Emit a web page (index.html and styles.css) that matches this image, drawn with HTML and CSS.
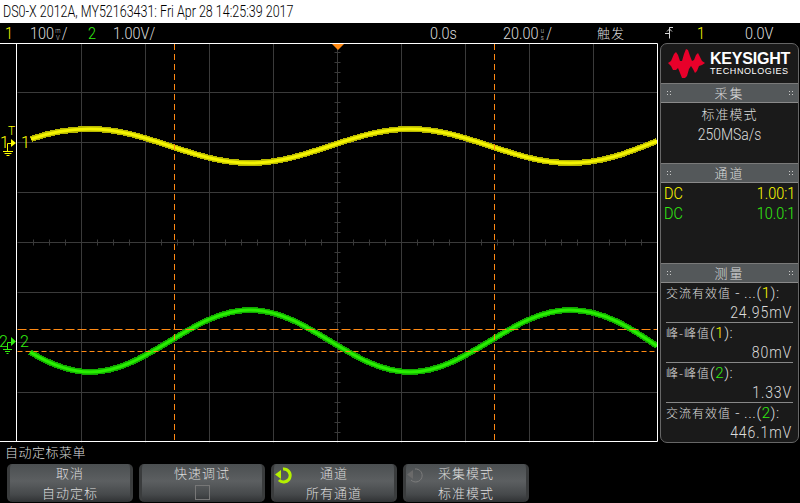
FILE: index.html
```html
<!DOCTYPE html>
<html>
    <head>
        <title>DSO-X 2012A</title>
        <link rel="stylesheet" href="styles.css">
    </head>
    <body>
        <div class="title-bar"><span class="title-text">DS0-X 2012A, MY52163431: Fri Apr 28 14:25:39 2017</span></div>

        <div class="status-bar">
            <span class="st st-ch1 yellow">1</span>
            <span class="st st-scale1">100<span class="stack"><i>m</i><i>V</i></span>/</span>
            <span class="st st-ch2 green">2</span>
            <span class="st st-scale2">1.00V/</span>
            <span class="st st-delay">0.0s</span>
            <span class="st st-time">20.00<span class="stack"><i>u</i><i>s</i></span>/</span>
            <span class="st-trig cjk">触发</span>
            <svg class="st-edge" width="9" height="12" viewBox="0 0 9 12">
                <path d="M0 6.500H4.500V.5H8M4.500 .5V11.500M2 4.500L4.500 2L7 4.500" fill="none" stroke="#d8d8d8"/>
            </svg>
            <span class="st st-trigch yellow">1</span>
            <span class="st st-level">0.0V</span>
        </div>

        <div class="main">
            <svg class="scope" width="658" height="400" viewBox="0 0 658 400">
                <g class="grid">
                    <path d="M81 0V399M145 0V399M209 0V399M273 0V399M337 0V399M401 0V399M465 0V399M529 0V399M593 0V399"/>
                    <path d="M17 49H657M17 99H657M17 149H657M17 199H657M17 249H657M17 299H657M17 349H657"/>
                    <path d="M334 9H340M334 19H340M334 29H340M334 39H340M334 59H340M334 69H340M334 79H340M334 89H340M334 109H340M334 119H340M334 129H340M334 139H340M334 159H340M334 169H340M334 179H340M334 189H340M334 209H340M334 219H340M334 229H340M334 239H340M334 259H340M334 269H340M334 279H340M334 289H340M334 309H340M334 319H340M334 329H340M334 339H340M334 359H340M334 369H340M334 379H340M334 389H340"/>
                    <path d="M33 196V202M49 196V202M65 196V202M97 196V202M113 196V202M129 196V202M161 196V202M177 196V202M193 196V202M225 196V202M241 196V202M257 196V202M289 196V202M305 196V202M321 196V202M353 196V202M369 196V202M385 196V202M417 196V202M433 196V202M449 196V202M481 196V202M497 196V202M513 196V202M545 196V202M561 196V202M577 196V202M609 196V202M625 196V202M641 196V202"/>
                </g>

                <g class="trace-yellow">
                    <path class="edge" d="M31 96C48 90 70 86 90 86C148 86 192 120 250 120C308 120 352 86 410 86C468 86 512 120 570 120C605 120 632 108 657 98"/>
                    <path class="core" d="M31 96C48 90 70 86 90 86C148 86 192 120 250 120C308 120 352 86 410 86C468 86 512 120 570 120C605 120 632 108 657 98"/>
                </g>
                <g class="trace-green">
                    <path class="edge" d="M30 309C48 320 70 329 90 329C148 329 192 267 250 267C308 267 352 329 410 329C468 329 512 267 570 267C605 267 632 286 657 303"/>
                    <path class="core" d="M30 309C48 320 70 329 90 329C148 329 192 267 250 267C308 267 352 329 410 329C468 329 512 267 570 267C605 267 632 286 657 303"/>
                </g>

                <g class="cursors">
                    <path d="M174 1V399M494 1V399"/>
                    <path class="cursor-h" d="M17 286.500H657"/>
                    <path class="cursor-h2" d="M17 308.500H657"/>
                </g>

                <path class="trig-mark" d="M332 1H344L338 7Z"/>
                <path class="frame" d="M0 .5H657.500V398.500H0M16.500 .5V398.500"/>

                <g class="mark-yellow">
                    <text x="8" y="92" class="mark-t">T</text>
                    <text x="0" y="105" class="mark-n">1</text>
                    <text x="21" y="105">1</text>
                    <path class="fill" d="M11 96V104L16 100Z"/>
                    <path class="line" d="M3 108.500H13M4.500 110.500H11.500M6.500 112.500H9.500M7.500 108V100.500H11"/>
                </g>
                <g class="mark-green">
                    <text x="-1" y="304" class="mark-n">2</text>
                    <text x="20" y="304">2</text>
                    <path class="fill" d="M11 294V303L16 298.500Z"/>
                    <path class="line" d="M3 306.500H12M5 308.500H10M6.500 310.500H8.500M7.500 306V299.500H11"/>
                </g>
            </svg>

            <div class="side">
                <div class="logo">
                    <svg class="logo-wave" width="37" height="29" viewBox="0 0 37 29">
                        <path d="M0 14L3 12L6 5L8 3L10 6L12 12L14 12L16 5L18 0L20 1L22 7L24 12L26 11L28 6L30 4L32 8L34 12L37 14L34 16L31 17L29 22L27 24L25 20L23 17L21 20L19 27L17 29L14 29L12 24L10 19L8 21L5 21L3 17Z" fill="#e8002a"/>
                    </svg>
                    <div class="logo-text">
                        <div class="logo-big">KEYSIGHT</div>
                        <div class="logo-small">TECHNOLOGIES</div>
                    </div>
                </div>

                <div class="side-head"><span class="dots"></span><span class="cjk">采集</span><span class="dots"></span></div>
                <div class="side-body acq">
                    <div class="cjk">标准模式</div>
                    <div class="acq-rate">250MSa/s</div>
                </div>

                <div class="side-head"><span class="dots"></span><span class="cjk">通道</span><span class="dots"></span></div>
                <div class="side-body chans">
                    <div class="chan yellow"><span class="chan-l">DC</span><span class="chan-r">1.00:1</span></div>
                    <div class="chan green"><span class="chan-l">DC</span><span class="chan-r">10.0:1</span></div>
                </div>

                <div class="side-head"><span class="dots"></span><span class="cjk">测量</span><span class="dots"></span></div>
                <div class="side-body meas">
                    <div class="meas-item">
                        <div class="meas-name"><span class="cjk">交流有效值</span> - ...(<span class="yellow">1</span>):</div>
                        <div class="meas-val">24.95mV</div>
                    </div>
                    <div class="meas-item">
                        <div class="meas-name"><span class="cjk">峰-峰值</span>(<span class="yellow">1</span>):</div>
                        <div class="meas-val">80mV</div>
                    </div>
                    <div class="meas-item">
                        <div class="meas-name"><span class="cjk">峰-峰值</span>(<span class="green">2</span>):</div>
                        <div class="meas-val">1.33V</div>
                    </div>
                    <div class="meas-item">
                        <div class="meas-name"><span class="cjk">交流有效值</span> - ...(<span class="green">2</span>):</div>
                        <div class="meas-val">446.1mV</div>
                    </div>
                </div>
            </div>
        </div>

        <div class="menu-title cjk">自动定标菜单</div>

        <div class="softkeys">
            <div class="key">
                <div class="cjk">取消</div>
                <div class="cjk">自动定标</div>
            </div>
            <div class="key">
                <div class="cjk">快速调试</div>
                <div class="checkbox"></div>
            </div>
            <div class="key">
                <svg class="knob" width="18" height="18" viewBox="0 0 18 18">
                    <path d="M8 2A6.500 6.500 0 1 1 4 13" fill="none" stroke="#b4f000" stroke-width="3"/>
                    <path d="M0 7.500L6 3V12Z" fill="#b4f000"/>
                </svg>
                <div class="cjk">通道</div>
                <div class="cjk">所有通道</div>
            </div>
            <div class="key">
                <svg class="knob" width="18" height="18" viewBox="0 0 18 18">
                    <path d="M8 2A6.500 6.500 0 1 1 4 13" fill="none" stroke="#7c7c7c" stroke-width="1"/>
                    <path d="M0 7.500L6 3V12Z" fill="#6a6a6a"/>
                </svg>
                <div class="cjk">采集模式</div>
                <div class="cjk">标准模式</div>
            </div>
        </div>
    </body>
</html>
```

FILE: styles.css
```css
* {
    box-sizing: border-box;
}
html, body {
    margin: 0;
    padding: 0;
}
body {
    width: 800px;
    height: 503px;
    overflow: hidden;
    background-color: #000;
    color: #dcdcdc;
    font-family: Roboto, "Liberation Sans", sans-serif;
    font-weight: 300;
    font-size: 15px;
}
.cjk {
    font-family: "Noto Sans CJK SC", sans-serif;
    font-weight: 300;
}
.yellow {
    color: #ffff00;
}
.green {
    color: #33ee11;
}

.title-bar {
    height: 23px;
    padding-left: 3px;
    background-color: #fff;
    color: #000;
    font-size: 17px;
    line-height: 22px;
    white-space: nowrap;
}
.title-text {
    display: inline-block;
    transform: scaleX(.735);
    transform-origin: left;
}

.status-bar {
    height: 20px;
    display: flex;
    align-items: center;
    font-size: 17px;
    line-height: 20px;
    white-space: nowrap;
}
.st {
    display: block;
    transform: scaleX(.85);
    transform-origin: left;
}
.st-ch1 { margin-left: 5px; width: 25px; }
.st-scale1 { width: 58px; }
.st-ch2 { width: 25px; }
.st-scale2 { width: 317px; }
.st-delay { width: 73px; }
.st-time { width: 94px; }
.st-trig { width: 68px; font-size: 13px; letter-spacing: 1px; line-height: 18px; }
.st-edge { margin-right: 23px; }
.st-trigch { width: 48px; }
.stack {
    display: inline-flex;
    flex-direction: column;
    vertical-align: middle;
    margin: 0 1px;
    font-size: 7px;
    line-height: 7px;
    width: 7px;
    text-align: center;
}
.stack i {
    font-style: normal;
}

.main {
    display: flex;
    height: 400px;
}
.scope {
    display: block;
    flex: none;
}
.grid path {
    fill: none;
    stroke: #3a3a3a;
    stroke-width: 1;
    transform: translate(.5px, .5px);
}
.trace-yellow path, .trace-green path {
    fill: none;
}
.edge {
    stroke-width: 6;
    shape-rendering: crispEdges;
}
.core {
    stroke-width: 3;
}
.trace-yellow .edge { stroke: #b8b800; }
.trace-yellow .core { stroke: #f4f400; }
.trace-green .edge { stroke: #12a800; }
.trace-green .core { stroke: #28ee00; }
.cursors path {
    fill: none;
    stroke: #ff8a14;
    stroke-width: 1;
    stroke-dasharray: 6 4;
    transform: translateX(.5px);
}
.cursors .cursor-h {
    stroke-dasharray: 9 3;
}
.cursors .cursor-h2 {
    stroke-dasharray: 5 3;
}
.trig-mark {
    fill: #ff8a14;
}
.frame {
    fill: none;
    stroke: #fff;
    stroke-width: 1;
}
.scope text {
    font-size: 16px;
}
.scope .mark-t {
    font-size: 12px;
}
.mark-yellow text { fill: #ffff00; }
.mark-yellow .fill { fill: #ffff00; }
.mark-yellow .line { fill: none; stroke: #ffff00; }
.mark-green text { fill: #33ee11; }
.mark-green .fill { fill: #33ee11; }
.mark-green .line { fill: none; stroke: #33ee11; }

.side {
    width: 139px;
    margin-left: 2px;
    display: flex;
    flex-direction: column;
    background-color: #1a1a1a;
    border: 1px solid #666;
    border-radius: 7px;
    overflow: hidden;
}
.logo {
    height: 39px;
    flex: none;
    display: flex;
    align-items: center;
    padding-left: 7px;
    gap: 5px;
}
.logo-text {
    font-family: "Liberation Sans", sans-serif;
    color: #fff;
}
.logo-big {
    font-size: 16px;
    font-weight: bold;
    letter-spacing: -.2px;
    line-height: 15px;
}
.logo-small {
    font-size: 9px;
    font-weight: normal;
    letter-spacing: .6px;
    line-height: 10px;
}
.side-head {
    height: 20px;
    flex: none;
    display: flex;
    align-items: center;
    justify-content: space-between;
    padding: 0 5px;
    background-color: #54585a;
    border-top: 1px solid #7a7a7a;
    border-bottom: 1px solid #8a8a8a;
    font-size: 13px;
    line-height: 16px;
    letter-spacing: 2px;
}
.dots {
    width: 5px;
    height: 7px;
    background-image: radial-gradient(#c8c8c8 .7px, transparent .8px);
    background-size: 3px 3px;
}
.side-body {
    overflow: hidden;
}
.acq {
    height: 60px;
    flex: none;
    text-align: center;
    letter-spacing: 1px;
}
.acq .cjk {
    font-size: 13px;
    line-height: 20px;
    margin-top: 1px;
}
.acq-rate {
    line-height: 20px;
    font-size: 17px;
    letter-spacing: 0;
    transform: scaleX(.82);
}
.chans {
    height: 80px;
    flex: none;
    padding: 0 3px;
}
.chan {
    display: flex;
    justify-content: space-between;
    height: 20px;
    line-height: 20px;
    font-size: 17px;
}
.chan-l {
    transform: scaleX(.85);
    transform-origin: left;
}
.chan-r {
    transform: scaleX(.85);
    transform-origin: right;
}
.meas {
    flex: 1;
    padding: 0 5px;
}
.meas-item {
    height: 40px;
    border-bottom: 1px solid #888;
    letter-spacing: .5px;
}
.meas-item:last-child {
    border-bottom: none;
}
.meas-name {
    height: 20px;
    line-height: 20px;
    font-size: 15px;
    white-space: nowrap;
}
.meas-name .cjk {
    font-size: 12px;
    letter-spacing: 1px;
}
.meas-val {
    text-align: right;
    height: 19px;
    line-height: 19px;
    font-size: 16px;
    letter-spacing: 1px;
    padding-right: 1px;
    transform: scaleX(.88);
    transform-origin: right;
}

.menu-title {
    height: 21px;
    padding-left: 5px;
    font-size: 13px;
    letter-spacing: .5px;
    line-height: 18px;
}
.softkeys {
    display: flex;
    gap: 6px;
    padding-left: 7px;
}
.key {
    position: relative;
    width: 126px;
    height: 38px;
    display: flex;
    flex-direction: column;
    align-items: center;
    background: linear-gradient(#4b4f51, #5c5f61 45%, #46494b 80%, #303234);
    border-radius: 5px;
    border-left: 3px solid #3a3c3d;
    border-right: 3px solid #3a3c3d;
    font-size: 13px;
    letter-spacing: 1px;
    line-height: 19px;
}
.key div:first-of-type {
    margin-top: -1px;
    margin-bottom: 1px;
}
.checkbox {
    width: 15px;
    height: 15px;
    margin-top: 2px;
    border: 1px solid #777;
}
.knob {
    position: absolute;
    left: 1px;
    top: 3px;
}
```
